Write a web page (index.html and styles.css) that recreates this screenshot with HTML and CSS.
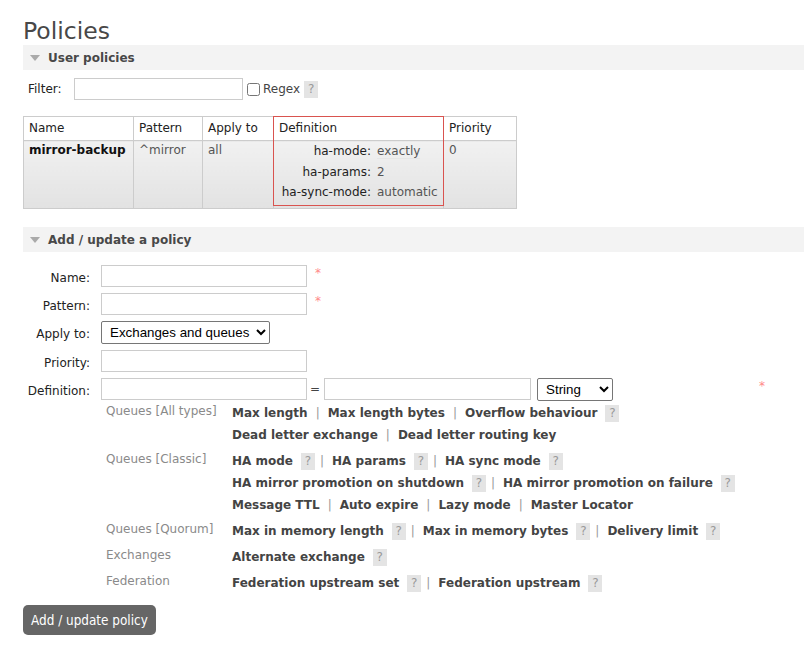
FILE: index.html
```html
<!DOCTYPE html>
<html>
<head>
<meta charset="utf-8">
<link rel="stylesheet" href="styles.css">
</head>
<body>
<div class="page">
  <h1 class="title">Policies</h1>

  <div class="section">
    <h2 class="sec-head"><span class="tri"></span>User policies</h2>
    <div class="filter">
      <span class="filter-label">Filter:</span>
      <input class="filter-input" type="text">
      <input class="regex-check" type="checkbox">
      <span class="regex-label">Regex</span>
      <span class="help">?</span>
    </div>
    <table class="list">
      <colgroup>
        <col class="c-name"><col class="c-pattern"><col class="c-apply"><col class="c-def"><col class="c-prio">
      </colgroup>
      <thead>
        <tr><th>Name</th><th>Pattern</th><th>Apply to</th><th class="def-head">Definition</th><th>Priority</th></tr>
      </thead>
      <tbody>
        <tr>
          <td class="name">mirror-backup</td>
          <td>^mirror</td>
          <td>all</td>
          <td class="def">
            <table class="facts">
              <tr><th>ha-mode:</th><td><span class="val-under">exactly</span></td></tr>
              <tr><th>ha-params:</th><td>2</td></tr>
              <tr><th>ha-sync-mode:</th><td>automatic</td></tr>
            </table>
          </td>
          <td>0</td>
        </tr>
      </tbody>
    </table>
  </div>

  <div class="section section-add">
    <h2 class="sec-head"><span class="tri"></span>Add / update a policy</h2>
    <div class="form">
      <div class="form-row">
        <label class="form-label">Name:</label>
        <input class="txt" type="text"><span class="mand">*</span>
      </div>
      <div class="form-row">
        <label class="form-label">Pattern:</label>
        <input class="txt" type="text"><span class="mand">*</span>
      </div>
      <div class="form-row row-select">
        <label class="form-label">Apply to:</label>
        <select class="sel sel-apply"><option>Exchanges and queues</option></select>
      </div>
      <div class="form-row">
        <label class="form-label">Priority:</label>
        <input class="txt" type="text">
      </div>
      <div class="form-row">
        <label class="form-label">Definition:</label>
        <input class="txt" type="text"><span class="eq">=</span><input class="txt txt-val" type="text">
        <select class="sel sel-type"><option>String</option></select>
        <span class="mand mand-far">*</span>
      </div>
    </div>

    <div class="args">
      <div class="arg-group">
        <div class="arg-label">Queues [All types]</div>
        <div class="arg-links">
          <div class="line"><span class="lnk">Max length</span><span class="sep">|</span><span class="lnk">Max length bytes</span><span class="sep">|</span><span class="lnk">Overflow behaviour</span><span class="help">?</span></div>
          <div class="line"><span class="lnk">Dead letter exchange</span><span class="sep">|</span><span class="lnk">Dead letter routing key</span></div>
        </div>
      </div>
      <div class="arg-group">
        <div class="arg-label">Queues [Classic]</div>
        <div class="arg-links">
          <div class="line"><span class="lnk">HA mode</span><span class="help">?</span><span class="sep">|</span><span class="lnk">HA params</span><span class="help">?</span><span class="sep">|</span><span class="lnk">HA sync mode</span><span class="help">?</span></div>
          <div class="line"><span class="lnk">HA mirror promotion on shutdown</span><span class="help">?</span><span class="sep">|</span><span class="lnk">HA mirror promotion on failure</span><span class="help">?</span></div>
          <div class="line"><span class="lnk">Message TTL</span><span class="sep">|</span><span class="lnk">Auto expire</span><span class="sep">|</span><span class="lnk">Lazy mode</span><span class="sep">|</span><span class="lnk">Master Locator</span></div>
        </div>
      </div>
      <div class="arg-group">
        <div class="arg-label">Queues [Quorum]</div>
        <div class="arg-links">
          <div class="line"><span class="lnk">Max in memory length</span><span class="help">?</span><span class="sep">|</span><span class="lnk">Max in memory bytes</span><span class="help">?</span><span class="sep">|</span><span class="lnk">Delivery limit</span><span class="help">?</span></div>
        </div>
      </div>
      <div class="arg-group">
        <div class="arg-label">Exchanges</div>
        <div class="arg-links">
          <div class="line"><span class="lnk">Alternate exchange</span><span class="help">?</span></div>
        </div>
      </div>
      <div class="arg-group">
        <div class="arg-label">Federation</div>
        <div class="arg-links">
          <div class="line"><span class="lnk">Federation upstream set</span><span class="help">?</span><span class="sep">|</span><span class="lnk">Federation upstream</span><span class="help">?</span></div>
        </div>
      </div>
    </div>

    <button class="btn" type="button">Add / update policy</button>
  </div>
</div>
</body>
</html>
```

FILE: styles.css
```css
html, body {
  margin: 0;
  padding: 0;
  background: #fff;
}
body {
  font-family: "DejaVu Sans", Verdana, sans-serif;
  font-size: 12px;
  color: #222;
}
.page {
  padding-left: 23px;
}
.title {
  margin: 17px 0 0 0;
  font-size: 23.5px;
  line-height: 28px;
  font-weight: normal;
  color: #484848;
}
.sec-head {
  box-sizing: border-box;
  margin: 0;
  height: 25px;
  padding-top: 1px;
  background: #f3f3f3;
  font-size: 12px;
  font-weight: bold;
  color: #484848;
  display: flex;
  align-items: center;
}
.tri {
  width: 0;
  height: 0;
  border-left: 5.5px solid transparent;
  border-right: 5.5px solid transparent;
  border-top: 6px solid #aaa;
  margin: 0 8px 0 7px;
}
.filter {
  display: flex;
  align-items: center;
  height: 22px;
  margin-top: 8px;
}
.filter-label {
  margin-left: 5px;
  width: 46px;
}
.filter-input {
  box-sizing: border-box;
  width: 169px;
  height: 22px;
  border: 1px solid #ccc;
  margin: 0;
  padding: 0 3px;
}
.regex-check {
  margin: 0 3px 0 4px;
  width: 13px;
  height: 13px;
}
.regex-label {
  color: #444;
}
.help {
  display: inline-block;
  width: 14px;
  height: 17px;
  line-height: 17px;
  text-align: center;
  background: #e4e4e4;
  color: #999;
  font-weight: normal;
  font-size: 12px;
  margin-left: 4px;
  vertical-align: middle;
}

/* policies table */
.list {
  margin-top: 16px;
  border-collapse: collapse;
  table-layout: fixed;
  width: 493px;
}
.c-name { width: 110px; }
.c-pattern { width: 69px; }
.c-apply { width: 71px; }
.c-def { width: 170px; }
.c-prio { width: 73px; }
.list > thead > tr > th {
  text-align: left;
  font-weight: normal;
  color: #222;
  background: #fff;
  border: 1px solid #ccc;
  padding: 3px 5px;
  line-height: 17px;
  height: 17px;
}
.list > tbody > tr > td {
  vertical-align: top;
  border: 1px solid #ccc;
  padding: 1px 5px 2px;
  line-height: 16px;
  height: 64px;
  color: #555;
  background: linear-gradient(#f1f1f1, #e2e2e2);
}
.list > tbody > tr > td.name {
  font-weight: bold;
  color: #111;
}
.def-head {
  position: relative;
}
.def-head::after {
  content: "";
  position: absolute;
  left: -1px;
  right: -1px;
  top: -1px;
  height: 88px;
  border: 1px solid #d9534f;
  pointer-events: none;
}
.list > tbody > tr > td.def {
  padding: 0;
}
.facts {
  border-collapse: collapse;
  width: 100%;
}
.facts th {
  text-align: right;
  font-weight: normal;
  color: #222;
  padding: 0 3px 0 0;
  line-height: 20.5px;
  white-space: nowrap;
}
.facts td {
  text-align: left;
  color: #555;
  padding: 0 0 0 3px;
  line-height: 20.5px;
  white-space: nowrap;
  width: 66px;
}
.val-under {
  border-bottom: 1px solid #e6e6e6;
}

/* add section */
.section-add {
  margin-top: 18px;
}
.form {
  margin-top: 13px;
}
.form-row {
  display: flex;
  align-items: center;
  height: 22px;
  margin-bottom: 6px;
}
.form-row:last-child {
  margin-bottom: 0;
}
.row-select {
  height: 23px;
}
.form-label {
  width: 67px;
  text-align: right;
  margin-right: 11px;
  padding-top: 3px;
  color: #222;
}
.txt {
  box-sizing: border-box;
  width: 206px;
  height: 22px;
  border: 1px solid #ccc;
  margin: 0;
  padding: 0 3px;
}
.txt-val {
  width: 207px;
}
.eq {
  margin: 0 4px 0 3px;
  color: #444;
}
.mand {
  color: #f88;
  font-size: 12px;
  align-self: flex-start;
  margin-left: 8px;
  line-height: 16px;
}
.mand-far {
  margin-left: 146px;
}
.sel {
  box-sizing: border-box;
  height: 23px;
  font-family: "Liberation Sans", Arial, sans-serif;
  font-size: 13.33px;
  color: #000;
  border: 1px solid #767676;
  border-radius: 2px;
  background: #fff;
  margin: 0;
  padding-left: 4px;
}
.sel-apply {
  width: 169px;
}
.sel-type {
  width: 76px;
  margin-left: 6px;
}

.args {
  margin-top: 2px;
  padding-left: 83px;
}
.arg-group {
  display: flex;
  margin-bottom: 4px;
}
.arg-label {
  width: 126px;
  color: #8a8a8a;
  line-height: 18px;
}
.arg-links {
  white-space: nowrap;
}
.line {
  height: 22px;
  line-height: 22px;
  display: flex;
  align-items: center;
}
.lnk {
  font-weight: bold;
  color: #444;
}
.lnk + .help {
  margin-left: 8px;
}
.sep {
  color: #999;
  margin: 0 8px 0 8px;
}
.help + .sep {
  margin-left: 5px;
}

.btn {
  display: block;
  margin-top: 11px;
  height: 30px;
  padding: 0 8px;
  border: none;
  border-radius: 5px;
  background: #666;
  color: #fff;
  font-family: "DejaVu Sans Condensed", "DejaVu Sans", sans-serif;
  font-size: 13.4px;
}
```
